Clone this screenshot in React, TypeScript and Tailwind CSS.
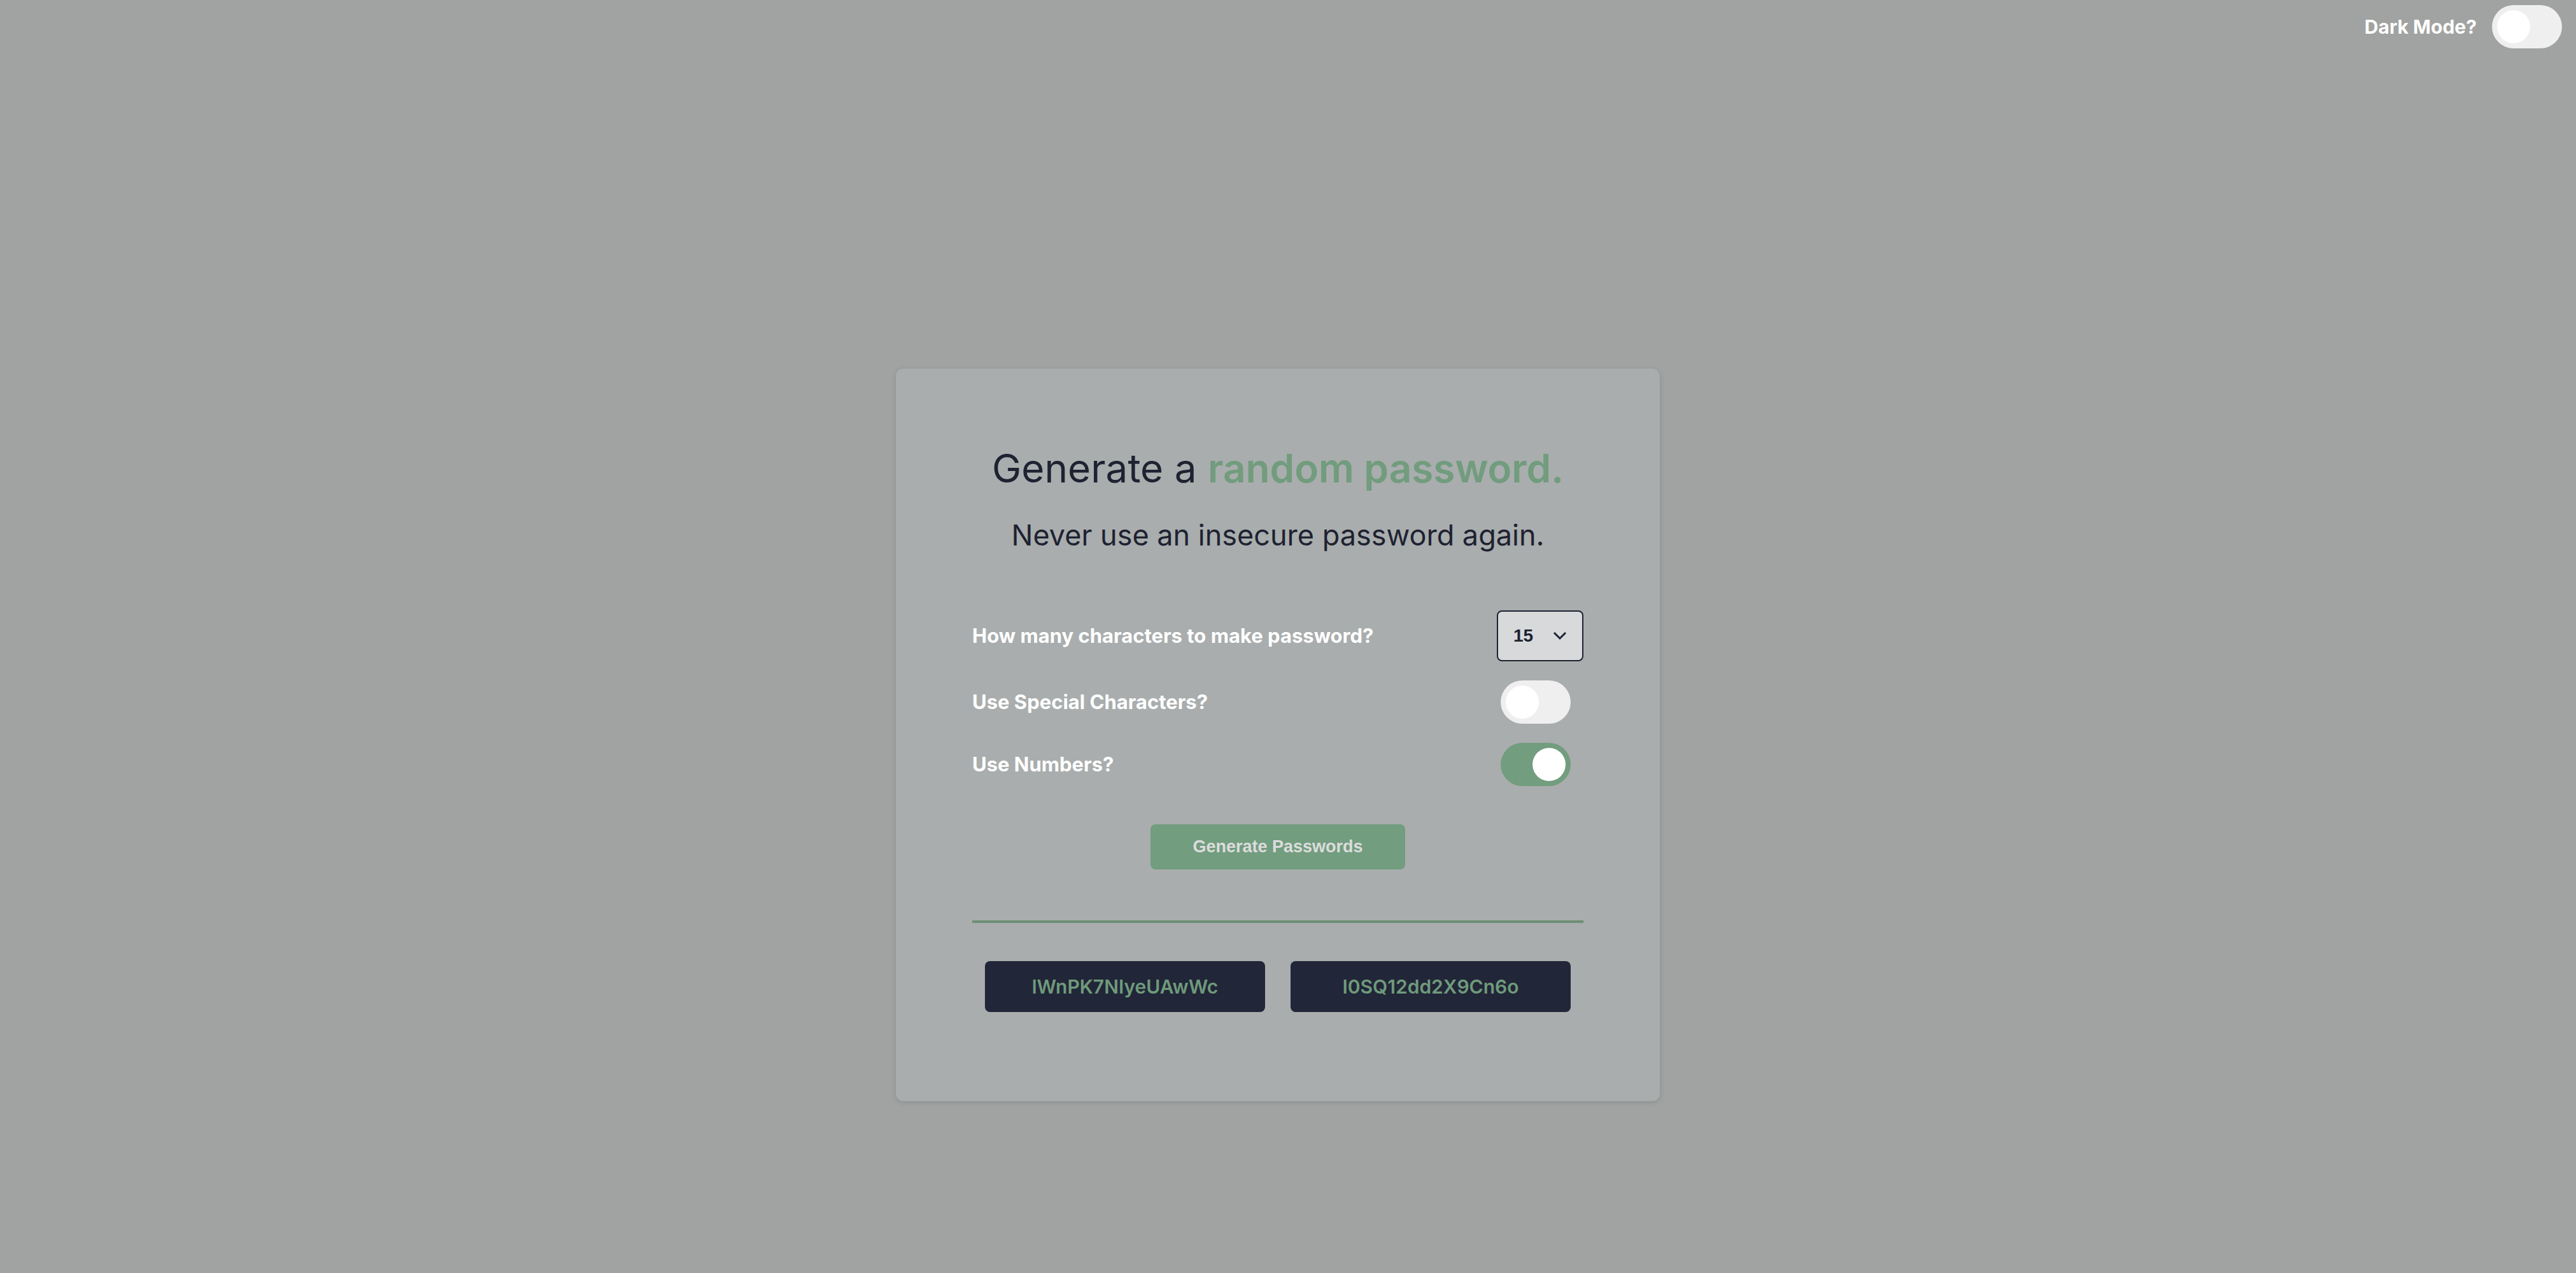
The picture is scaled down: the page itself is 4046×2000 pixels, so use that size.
import { useState } from "react";

const FONT = "font-['Inter','Noto_Sans',sans-serif]";

function Toggle({ on, onChange }: { on: boolean; onChange: () => void }) {
  return (
    <button
      type="button"
      onClick={onChange}
      className={`flex h-[68px] w-[110px] shrink-0 items-center rounded-full px-2 ${
        on ? "justify-end bg-[#729d7e]" : "justify-start bg-[#efefef]"
      }`}
    >
      <span className="h-[52px] w-[52px] rounded-full bg-white" />
    </button>
  );
}

const PASSWORDS = ["lWnPK7NIyeUAwWc", "I0SQ12dd2X9Cn6o"];

export default function App() {
  const [dark, setDark] = useState(false);
  const [special, setSpecial] = useState(false);
  const [numbers, setNumbers] = useState(true);

  return (
    <div className={`min-h-[2000px] w-full bg-[#a0a3a1] ${FONT}`}>
      <header className="flex items-center justify-end gap-[24px] pr-[22px] pt-2">
        <span className="text-[30px] font-bold text-white">Dark Mode?</span>
        <Toggle on={dark} onChange={() => setDark(!dark)} />
      </header>

      <div className="flex justify-center pr-[32px] pt-[503px]">
        <main className="w-[1200px] rounded-xl bg-[#a9adad] px-[120px] pb-[140px] pt-[121px] shadow-[0_2px_8px_rgba(0,0,0,0.12)]">
          <h1 className="text-center text-[62px] leading-[72px] text-[#1e2231]">
            Generate a{" "}
            <span className="font-semibold text-[#719c7d]">random password.</span>
          </h1>
          <p className="mt-[44px] text-center text-[45px] leading-[50px] text-[#1e2231]">
            Never use an insecure password again.
          </p>

          <div className="mt-[93px] flex flex-col gap-[30px]">
            <div className="flex items-center justify-between">
              <label className="text-[31px] font-bold text-white">
                How many characters to make password?
              </label>
              <div className="flex h-[80px] w-[136px] items-center gap-[31px] rounded-lg border-2 border-[#1e2231] bg-[#d8d9db] pl-6 font-['Liberation_Sans',sans-serif] text-[28px] font-bold text-[#1e2231]">
                <span>15</span>
                <svg width="22" height="14" viewBox="0 0 22 14" fill="none">
                  <path d="M2 2l9 9 9-9" stroke="#1e2231" strokeWidth="3" />
                </svg>
              </div>
            </div>
            <div className="flex items-center justify-between pr-5">
              <label className="text-[31px] font-bold text-white">Use Special Characters?</label>
              <Toggle on={special} onChange={() => setSpecial(!special)} />
            </div>
            <div className="flex items-center justify-between pr-5">
              <label className="text-[31px] font-bold text-white">Use Numbers?</label>
              <Toggle on={numbers} onChange={() => setNumbers(!numbers)} />
            </div>
          </div>

          <div className="mt-[60px] flex justify-center">
            <button className="h-[71px] w-[400px] rounded-lg bg-[#729d7f] font-['Liberation_Sans',sans-serif] text-[27px] font-bold text-[#dcdcdc]">
              Generate Passwords
            </button>
          </div>

          <hr className="mt-[80px] h-[4px] border-0 bg-[#6c8f75]" />

          <div className="mt-[60px] flex justify-center gap-10">
            {PASSWORDS.map((pw) => (
              <div
                key={pw}
                className="flex h-[80px] w-[440px] items-center justify-center rounded-lg bg-[#212638] text-[30px] font-semibold text-[#6f9a7b]"
              >
                {pw}
              </div>
            ))}
          </div>
        </main>
      </div>
    </div>
  );
}
